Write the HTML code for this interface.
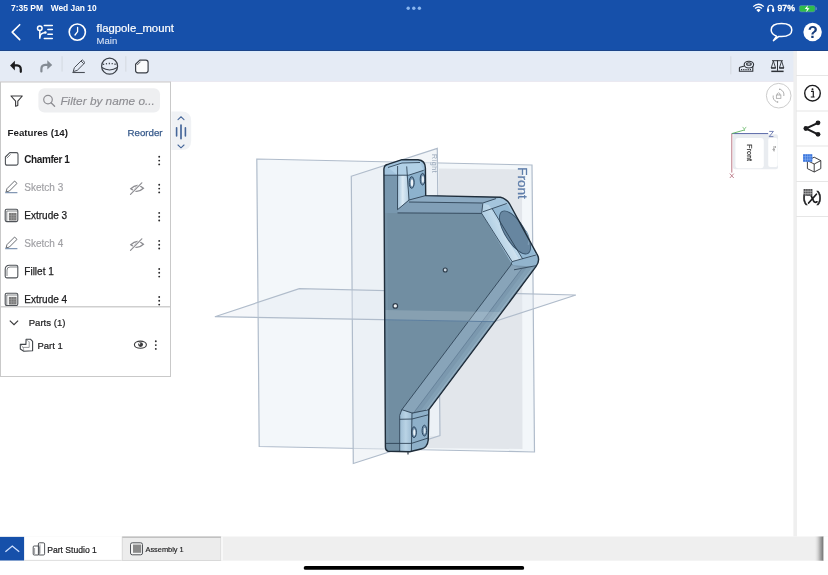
<!DOCTYPE html>
<html><head><meta charset="utf-8">
<style>
html,body{margin:0;padding:0;width:828px;height:575px;overflow:hidden;background:#fff}
svg{display:block;font-family:"Liberation Sans",sans-serif;will-change:transform}
</style></head><body>
<svg width="828" height="575" viewBox="0 0 828 575">
<!-- ===== VIEWPORT ===== -->
<defs>
  <clipPath id="silclip"><path d="M385.4,447 L383.9,169 Q384.2,164.6 388.5,164.2 L402.1,159.6 L418,159.8 Q425.3,160.5 425.4,168 L425.7,195.6 L500.5,197.2 Q506.2,198.6 509.4,203.5 L536.5,253.3 Q541,260 535.9,266.7 L428.9,409.7 L428.2,440.2 Q427.5,447.5 421,449 L409.7,451.8 L388,451.2 Q385.4,450.6 385.4,447 Z"/></clipPath>
  <linearGradient id="hl1" x1="0" y1="0" x2="1" y2="0">
    <stop offset="0" stop-color="#a2c2da"/><stop offset="0.45" stop-color="#dcebf5"/><stop offset="1" stop-color="#b0cde2"/>
  </linearGradient>
  <linearGradient id="hl2" x1="0" y1="0" x2="1" y2="-0.6">
    <stop offset="0" stop-color="#b4d1e5"/><stop offset="0.5" stop-color="#e4f0f8"/><stop offset="1" stop-color="#bcd7ea"/>
  </linearGradient>
  <linearGradient id="hl3" x1="0" y1="0" x2="1" y2="0">
    <stop offset="0" stop-color="#9dbcd3"/><stop offset="0.5" stop-color="#b9d3e5"/><stop offset="1" stop-color="#9cbbd2"/>
  </linearGradient>
</defs>
<g id="viewport">
  <polygon points="256.8,159 532,165 534.5,452 259.2,446.5" fill="#f3f7fa" stroke="#b0bccb" stroke-width="1.2"/>
  <polygon points="439,168.6 522,169.4 522.5,449 420,448 420,436 439,436" fill="#e2e6eb"/>
  <polygon points="351.3,176.2 437.3,148.4 440,435.6 353.3,463.5" fill="#e6ebf1" fill-opacity="0.5" stroke="#b0bccb" stroke-width="1.2"/>
  <polygon points="214.9,316.7 299.3,288.7 575.9,295 494,321.7" fill="#e3e9f0" fill-opacity="0.35" stroke="#b0bccb" stroke-width="1.2"/>
  <text x="0" y="0" font-size="13.5" fill="#5f7eaa" stroke="#5f7eaa" stroke-width="0.3" transform="translate(518,167.3) rotate(90)">Front</text>
  <text x="0" y="0" font-size="7" fill="#9aa8ba" transform="translate(432.4,154) rotate(90)" letter-spacing="0.6">Right</text>
</g>
<g id="part" stroke-linejoin="round">
  <path d="M385.4,447 L383.9,169 Q384.2,164.6 388.5,164.2 L402.1,159.6 L418,159.8 Q425.3,160.5 425.4,168 L425.7,195.6 L500.5,197.2 Q506.2,198.6 509.4,203.5 L536.5,253.3 Q541,260 535.9,266.7 L428.9,409.7 L428.2,440.2 Q427.5,447.5 421,449 L409.7,451.8 L388,451.2 Q385.4,450.6 385.4,447 Z" fill="#718ea2"/>
  <!-- left edge subtle strip -->
  <path d="M384.2,176 L387.4,176 L388.8,443.5 L385.4,443.5 Z" fill="#7894a9" fill-opacity="0.6"/>
  <path d="M384,175.2 L397.6,175.2 L397.5,212.9 L384.1,212.9 Z" fill="#7897ae"/>
  <!-- tab top surface -->
  <path d="M383.9,175.2 L383.9,169 Q384.2,164.6 388.5,164.2 L402.1,159.6 L418,159.8 Q425.3,160.5 425.4,168 L423.7,170.3 L408.7,175.2 Z" fill="#a2c3dc"/>
  <path d="M388,167.5 L402,163 L420,162.5 L423.7,170.3 L408.7,175.2 L397.6,175.2 Z" fill="#b1d0e6"/>
  <!-- tab right face -->
  <path d="M406.7,175.5 L423.7,170.3 L425.4,168 L425.7,195.6 L409,200 Z" fill="#8db2cd"/>
  <!-- fillet highlight strip top tab -->
  <path d="M397.6,175.2 L406.7,175.2 L409,200 L397.5,209.7 Z" fill="url(#hl1)"/>
  <!-- step face -->
  <path d="M397.5,209.7 L409,200 L425.7,195.6 L500.5,197.2 L482.8,203.5 L481.7,213.4 L397.5,212.9 Z" fill="#819fb7"/>
  <path d="M409,200 L425.7,195.6 L500.5,197.2 L496,198.8 L482.8,203 L409,202 Z" fill="#8dabc3"/>
  <!-- head ring -->
  <path d="M482.8,203 L500.5,197.2 Q506.2,198.6 509.4,203.5 L536.5,253.3 Q541,260 535.9,266.7 L512,264 L481.7,213.4 Z" fill="#a4c5dd"/>
  <!-- head face -->
  <path d="M491,208.6 L507.5,204.5 L535,254 L520.5,259.5 Z" fill="#93b8d3"/>
  <!-- highlight strip -->
  <path d="M481.7,213.4 L482.8,203.5 L488.5,205 L519.8,260.2 L512.1,261.6 Z" fill="url(#hl2)"/>
  <path d="M488.5,205 L492.2,208.7 L522.6,258.9 L519.8,260.2 Z" fill="#bcd7ea"/>
  <!-- head bottom -->
  <path d="M512.1,261.6 L522.6,258.9 L537.9,254.7 Q541,260 535.9,266.7 L514,269.8 Z" fill="#92b4cd"/>
  <!-- hole -->
  <ellipse cx="515" cy="232.4" rx="9.8" ry="24.6" transform="rotate(-32 515 232.4)" fill="#6786a0" stroke="#38536b" stroke-width="0.9"/>
  <path d="M527.5,246 Q529.8,240 526,232" fill="none" stroke="#7d9cb4" stroke-width="1.6" transform="rotate(-4 515 232.4)"/>
  <!-- arm surface -->
  <path d="M510.9,265.1 L535.9,266.7 L428.9,409.7 L412,413 L401.8,409.7 Z" fill="#7b98ae"/>
  <path d="M510.9,265.1 L522,268.4 L414,412.4 L401.8,409.7 Z" fill="#88a4b9"/>
  <path d="M527,267.5 L535.9,266.7 L428.9,409.7 L420,411.5 Z" fill="#82a0b5"/>
  <!-- bottom tab -->
  <path d="M399.7,415.4 L401.8,409.7 L412,413 L411.4,451.5 L399.7,451.3 Z" fill="url(#hl3)"/>
  <path d="M411.4,414.2 L428.9,409.7 L428.2,440.2 Q427.5,447.5 421,449 L411.4,451.5 Z" fill="#8eb0c9"/>
  <ellipse cx="414" cy="432.2" rx="2.4" ry="5.4" fill="#6f8ea8" stroke="#2c4660" stroke-width="1"/>
  <ellipse cx="414.3" cy="432.5" rx="1.1" ry="3.3" fill="#e9f2f8"/>
  <ellipse cx="424.4" cy="430.6" rx="2.3" ry="5.4" fill="#7593ac" stroke="#2c4660" stroke-width="1"/>
  <ellipse cx="424.7" cy="430.8" rx="1" ry="3.1" fill="#d5e5f0"/>
  <!-- top tab holes -->
  <ellipse cx="411.7" cy="182.5" rx="2.5" ry="5.8" fill="#6f8ea8" stroke="#2c4660" stroke-width="1"/>
  <ellipse cx="412" cy="182.8" rx="1.2" ry="3.6" fill="#eef5fa"/>
  <ellipse cx="422.6" cy="179.2" rx="2.4" ry="5.8" fill="#7593ac" stroke="#2c4660" stroke-width="1"/>
  <ellipse cx="422.9" cy="179.4" rx="1.1" ry="3.4" fill="#e2edf5"/>
  <!-- small dots on face -->
  <circle cx="395.3" cy="305.9" r="2.3" fill="#eef1f3" stroke="#2e3d4c" stroke-width="1.2"/>
  <circle cx="445.2" cy="270" r="2" fill="#c9d5de" stroke="#2e3d4c" stroke-width="1.1"/>
  <!-- edges -->
  <g fill="none" stroke="#2b3f52" stroke-width="0.85">
    <path d="M383.9,175.2 L408.7,175.2 L423.7,170.3"/>
    <path d="M388,167.5 L402,163 L420,162.5"/>
    <path d="M397.6,166 L397.5,209.7 L409,200 L425.7,195.6"/>
    <path d="M406.7,166.4 L409,200"/>
    <path d="M397.5,212.9 L481.7,213.4"/>
    <path d="M409,202 L482.8,203 L496,198.6"/>
    <path d="M482.8,203.5 L481.7,213.4 L512.1,261.6 L535.9,255"/>
    <path d="M482.8,211.8 L506.8,203.5"/>
    <path d="M492.2,208.7 L522.6,258.9"/>
    <path d="M510.9,265.1 L401.8,409.7 L399.7,415.4 L399.7,451.3"/>
    <path d="M514,269.8 L535.9,265.7"/>
    <path d="M401.8,409.7 L412,413 L428.9,409.7"/>
    <path d="M412,413 L411.4,451.5"/>
    <path d="M399.7,419.3 L412,419 L428.2,414.8"/>
    <path d="M385.4,443.4 L411.4,443.4 L428.2,438"/>
    <path d="M512.1,261.6 L510.9,265.1"/>
    <path d="M522,268.4 L414,412.4" stroke-width="0.6" stroke="#56718a"/>
    <path d="M532.2,268.2 L426.2,410" stroke-width="1" stroke="#9db6c8" stroke-opacity="0.8"/>
  </g>
  <!-- top plane band over part -->
  <g clip-path="url(#silclip)">
    <polygon points="214.9,316.7 243.5,307.2 522.6,312.6 494,321.7" fill="#e3ebf2" fill-opacity="0.2"/>
    <line x1="214.9" y1="316.7" x2="494" y2="321.7" stroke="#5d7fa0" stroke-width="1"/>
  </g>
  <path d="M385.4,447 L383.9,169 Q384.2,164.6 388.5,164.2 L402.1,159.6 L418,159.8 Q425.3,160.5 425.4,168 L425.7,195.6 L500.5,197.2 Q506.2,198.6 509.4,203.5 L536.5,253.3 Q541,260 535.9,266.7 L428.9,409.7 L428.2,440.2 Q427.5,447.5 421,449 L409.7,451.8 L388,451.2 Q385.4,450.6 385.4,447 Z" fill="none" stroke="#1f2d3a" stroke-width="1.4"/>
</g>
<path d="M408,452 L408,454.5" stroke="#3a4450" stroke-width="1.3"/>
<!-- ===== HEADER ===== -->
<rect x="0" y="0" width="828" height="51" fill="#1650aa"/>
<rect x="0" y="50" width="828" height="1" fill="#1d4488"/>
<text x="11" y="11.2" font-size="8.5" font-weight="bold" fill="#fff">7:35 PM</text>
<text x="50.7" y="11.2" font-size="8.4" font-weight="bold" fill="#fff">Wed Jan 10</text>
<circle cx="408.2" cy="8.2" r="1.7" fill="#8ab6ee"/>
<circle cx="413.8" cy="8.2" r="1.7" fill="#8ab6ee"/>
<circle cx="419.4" cy="8.2" r="1.7" fill="#8ab6ee"/>
<!-- wifi -->
<g fill="#fff">
  <path d="M758.5,12.2 L756.3,9.9 Q758.5,8.1 760.7,9.9 Z"/>
  <path d="M755.5,9.1 Q758.5,6.3 761.5,9.1 L762.4,8.1 Q758.5,4.6 754.6,8.1 Z"/>
  <path d="M753.6,7.1 Q758.5,2.7 763.4,7.1 L764.2,6.2 Q758.5,1.0 752.8,6.2 Z"/>
</g>
<!-- headphones -->
<path d="M767.9,10.8 L767.9,8.8 Q767.9,5.2 770.6,5.2 Q773.3,5.2 773.3,8.8 L773.3,10.8" fill="none" stroke="#fff" stroke-width="1.1"/>
<rect x="767" y="8.6" width="2.1" height="3.4" rx="0.9" fill="#fff"/>
<rect x="772.1" y="8.6" width="2.1" height="3.4" rx="0.9" fill="#fff"/>
<text x="777.6" y="11.3" font-size="8.6" fill="#fff" stroke="#fff" stroke-width="0.45">97%</text>
<!-- battery -->
<rect x="799.3" y="5.5" width="15.8" height="6.4" rx="1.8" fill="#2fbd4a" stroke="#5e86c8" stroke-width="0.6"/>
<rect x="815.6" y="7.3" width="1.3" height="2.8" rx="0.5" fill="#5e86c8"/>
<path d="M807.8,5.2 L804.8,9 L807,9 L806.2,12.2 L809.5,8.2 L807.3,8.2 Z" fill="#fff"/>
<!-- back chevron -->
<path d="M19.7,24.7 L12.2,32.1 L19.7,39.6" fill="none" stroke="#fff" stroke-width="1.6" stroke-linecap="round" stroke-linejoin="round"/>
<!-- branch icon -->
<g fill="none" stroke="#fff" stroke-width="1.5" stroke-linecap="round">
  <circle cx="39.8" cy="28.3" r="2.3"/>
  <path d="M39.8,30.6 L39.8,38.2"/>
  <path d="M39.8,37 Q40,33.6 45.2,32.6"/>
  <path d="M44.3,25.6 L52.3,25.6"/>
  <path d="M47.9,29.4 L52.3,29.4"/>
  <path d="M47.9,34.2 L52.3,34.2"/>
  <path d="M44.3,38.6 L52.3,38.6"/>
</g>
<circle cx="45.4" cy="32.5" r="1.3" fill="#fff"/>
<!-- clock -->
<circle cx="77.3" cy="32.1" r="8.1" fill="none" stroke="#fff" stroke-width="1.6"/>
<path d="M77.6,27.4 L77.6,31.6 L75,35" fill="none" stroke="#fff" stroke-width="1.3" stroke-linecap="round" stroke-linejoin="round"/>
<text x="96.6" y="32" font-size="11.3" fill="#fff" stroke="#fff" stroke-width="0.2">flagpole_mount</text>
<text x="96.6" y="44.2" font-size="9.5" fill="#d2def2" stroke="#d2def2" stroke-width="0.15">Main</text>
<!-- speech bubble -->
<path d="M776.6,36.3 Q771.2,34.2 771.2,30.1 Q771.2,23.6 781.5,23.6 Q791.8,23.6 791.8,30.1 Q791.8,36.6 781.5,36.6 Q779.8,36.6 778.9,36.4 L773.4,40.6 Z" fill="none" stroke="#fff" stroke-width="1.5" stroke-linejoin="round"/>
<!-- help -->
<circle cx="812.6" cy="32" r="9.2" fill="#fff"/>
<text x="812.8" y="38.2" font-size="16.5" font-weight="bold" fill="#163c7c" text-anchor="middle">?</text>

<!-- ===== TOOLBAR ===== -->
<rect x="0" y="51" width="794" height="30" fill="#e5ebf5"/>
<rect x="0" y="51" width="794" height="1.4" fill="#dcebfb"/>
<rect x="0" y="81" width="794" height="1" fill="#ebe9f1"/>
<!-- undo -->
<path d="M10.1,65.6 L14.9,60.8 L14.9,70.4 Z" fill="#1c1c1e"/>
<path d="M14,65.4 L17,65.4 Q20.8,65.6 20.8,69.5 L20.8,71.8" fill="none" stroke="#1c1c1e" stroke-width="2.2" stroke-linecap="round"/>
<!-- redo -->
<path d="M52.2,64.9 L47.3,60.2 L47.3,69.6 Z" fill="#848b94"/>
<path d="M48.2,64.8 L45.2,64.8 Q41.4,65 41.4,69 L41.4,71.4" fill="none" stroke="#848b94" stroke-width="2.2" stroke-linecap="round"/>
<rect x="61.6" y="56.2" width="0.9" height="15.4" fill="#d2d7de"/>
<!-- pencil -->
<g fill="none" stroke="#4a4f57" stroke-width="1" stroke-linejoin="round">
  <path d="M73.2,71.6 L74.4,67.6 L82.2,59.8 L85,62.6 L77.2,70.4 Z"/>
  <path d="M81,61 L83.8,63.8"/>
</g>
<path d="M72.4,72.5 L84.8,72.5" stroke="#4a4f57" stroke-width="1.1"/>
<!-- sphere -->
<circle cx="109.6" cy="66.2" r="8" fill="none" stroke="#3a3f47" stroke-width="1.2"/>
<path d="M101.8,67.6 Q109.6,72.4 117.4,67.6" fill="none" stroke="#3a3f47" stroke-width="1.2"/>
<path d="M103,64.4 Q109.6,62.6 116.2,64.4" fill="none" stroke="#3a3f47" stroke-width="1.3" stroke-dasharray="1.2 1.7"/>
<rect x="125.4" y="56.2" width="0.9" height="15.4" fill="#d2d7de"/>
<!-- chamfer tool -->
<path d="M135.6,64.2 L139.8,60.1 L145.8,60.1 Q148.1,60.1 148.1,62.4 L148.1,70.6 Q148.1,72.8 145.8,72.8 L137.9,72.8 Q135.6,72.8 135.6,70.6 Z" fill="#fafbfc" stroke="#3a3f47" stroke-width="1.2" stroke-linejoin="round"/>
<path d="M137.2,65 L140.6,61.6" stroke="#3a3f47" stroke-width="0.8"/>
<!-- right toolbar -->
<rect x="730.4" y="56.3" width="0.9" height="18" fill="#d2d7de"/>
<g fill="none" stroke="#2e3238" stroke-width="1.1">
  <ellipse cx="748.9" cy="64.6" rx="4.7" ry="3.4"/>
  <ellipse cx="748.9" cy="64" rx="2.3" ry="1.3"/>
  <path d="M744.4,66 L740,67.2 Q739.4,67.4 739.4,68 L739.4,71.3 L752.8,71.3 L752.8,66"/>
</g>
<path d="M741,69.6 L751.6,69.6" stroke="#2e3238" stroke-width="1.2" stroke-dasharray="1 0.8"/>
<g fill="#2e3238">
  <rect x="771.3" y="70.6" width="12.3" height="1.5"/>
  <rect x="772" y="60.2" width="10.8" height="1"/>
  <rect x="777" y="60.2" width="1" height="10.6"/>
  <path d="M773.4,61 L771.2,68 L775.6,68 Z" fill="none" stroke="#2e3238" stroke-width="0.9"/>
  <path d="M781.6,61 L779.4,68 L783.8,68 Z" fill="none" stroke="#2e3238" stroke-width="0.9"/>
  <rect x="771" y="67.3" width="4.8" height="1.3"/>
  <rect x="779.2" y="67.3" width="4.8" height="1.3"/>
</g>

<!-- ===== RIGHT PANEL ===== -->
<rect x="794" y="51" width="34" height="485.5" fill="#fff"/>
<rect x="793.4" y="51" width="3.6" height="485.5" fill="#efefef"/>
<g fill="#e6e6e6">
<rect x="796" y="75" width="32" height="1"/>
<rect x="796" y="110.5" width="32" height="1"/>
<rect x="796" y="145.5" width="32" height="1"/>
<rect x="796" y="181" width="32" height="1"/>
<rect x="796" y="216" width="32" height="1"/>
</g>
<!-- info -->
<circle cx="812.5" cy="93.2" r="7.8" fill="none" stroke="#1c1c1e" stroke-width="1.4"/>
<circle cx="812.5" cy="89.2" r="1" fill="#1c1c1e"/>
<path d="M811,91.4 L813.3,91.4 L813.3,96.8 M810.8,97 L814.6,97" fill="none" stroke="#1c1c1e" stroke-width="1.2"/>
<!-- share -->
<g fill="#1c1c1e">
  <circle cx="805.9" cy="128.5" r="2.4"/>
  <circle cx="818" cy="122.8" r="2.4"/>
  <circle cx="818" cy="134.3" r="2.4"/>
</g>
<path d="M818,122.8 L805.9,128.5 L818,134.3" fill="none" stroke="#1c1c1e" stroke-width="2"/>
<!-- cube w grid -->
<g>
  <path d="M814.2,157.2 L820.8,160.6 L820.8,168.6 L814.2,172 L807.4,168.6 L807.4,160.6 Z" fill="#fff" stroke="#2a2a2c" stroke-width="0.9" stroke-linejoin="round"/>
  <path d="M807.4,160.6 L814.2,164 L820.8,160.6 M814.2,164 L814.2,172" fill="none" stroke="#2a2a2c" stroke-width="0.9"/>
  <rect x="803.1" y="154.2" width="9.2" height="7.6" fill="#3a74dc"/>
  <path d="M803.1,156.7 L812.3,156.7 M803.1,159.2 L812.3,159.2 M805.4,154.2 L805.4,161.8 M807.7,154.2 L807.7,161.8 M810,154.2 L810,161.8" stroke="#9cc0f5" stroke-width="0.5"/>
</g>
<!-- variables -->
<g>
  <text x="802.4" y="202.3" font-size="14.6" fill="#1c1c1e" stroke="#1c1c1e" stroke-width="0.5">(</text>
  <text x="816.8" y="202.3" font-size="14.6" fill="#1c1c1e" stroke="#1c1c1e" stroke-width="0.5">)</text>
  <path d="M807.8,195.2 Q810.2,193.6 811.6,196.6 L813.4,200.6 Q814.8,203.4 817,201.8" fill="none" stroke="#1c1c1e" stroke-width="1.7" stroke-linecap="round"/>
  <path d="M816.4,194.2 L808.6,203" fill="none" stroke="#1c1c1e" stroke-width="1.7" stroke-linecap="round"/>
  <rect x="803.6" y="189" width="8.8" height="6.8" fill="#4a4a4c"/>
  <path d="M803.6,191.3 L812.4,191.3 M803.6,193.6 L812.4,193.6 M805.8,189 L805.8,195.8 M808,189 L808,195.8 M810.2,189 L810.2,195.8" stroke="#e0e0e0" stroke-width="0.5"/>
</g>
<!-- rotate circle -->
<circle cx="778.7" cy="95.7" r="12.3" fill="#fff" fill-opacity="0.6" stroke="#c6c6c6" stroke-width="0.9"/>
<path d="M780.5,89.5 A6,6 0 0 1 783.8,96" fill="none" stroke="#9a9a9a" stroke-width="0.8"/>
<path d="M776.6,101.8 A6,6 0 0 1 773.2,95.5" fill="none" stroke="#9a9a9a" stroke-width="0.8"/>
<circle cx="779.8" cy="89.3" r="0.8" fill="#9a9a9a"/>
<circle cx="777.5" cy="102" r="0.8" fill="#9a9a9a"/>
<rect x="776.3" y="95" width="4.6" height="3.3" fill="none" stroke="#9a9a9a" stroke-width="0.7"/>
<path d="M777.3,95 L777.3,93.6 Q778.6,92 779.9,93.6 L779.9,95" fill="none" stroke="#9a9a9a" stroke-width="0.7"/>
<!-- view cube -->
<g>
  <rect x="733" y="134.2" width="45" height="35" rx="2" fill="#e3e7ec" fill-opacity="0.8"/>
  <rect x="735.4" y="138" width="28.4" height="30.2" rx="3" fill="#fff"/>
  <rect x="768.2" y="138" width="9.4" height="29" rx="2" fill="#fff"/>
  <text x="0" y="0" font-size="7.2" fill="#333" stroke="#333" stroke-width="0.2" transform="translate(747.4,144.2) rotate(90)">Front</text>
  <text x="0" y="0" font-size="3.4" fill="#555" transform="translate(772.6,146) rotate(90)">Top</text>
  <path d="M731.8,133.6 L731.8,172.6" stroke="#b46a78" stroke-width="0.9"/>
  <path d="M731.8,133.6 L768.2,133.6" stroke="#5565a5" stroke-width="1"/>
  <path d="M731.8,133.6 L744.3,130" stroke="#5fb45f" stroke-width="0.9"/>
  <path d="M742.6,126.9 L744.4,129.2 L746.2,126.9 M744.4,129.2 L744.4,131" fill="none" stroke="#5fb45f" stroke-width="0.7"/>
  <path d="M769.2,131.4 L773.4,131.4 L769.2,136.6 L773.4,136.6" fill="none" stroke="#5565a5" stroke-width="0.8"/>
  <path d="M729.8,173.6 L733.8,178 M733.8,173.6 L729.8,178" fill="none" stroke="#b46a78" stroke-width="0.8"/>
</g>

<!-- ===== LEFT PANEL ===== -->
<rect x="0.5" y="82" width="170" height="294.5" fill="#fff" stroke="#c9c9c9" stroke-width="1"/>
<!-- funnel -->
<path d="M11,96 L22.3,96 L17.8,101.2 L17.8,105.4 L15.6,106.2 L15.6,101.2 Z" fill="none" stroke="#3a3a3c" stroke-width="1.1" stroke-linejoin="round"/>
<rect x="38.4" y="88.3" width="121.6" height="24.2" rx="6" fill="#eeeff1"/>
<circle cx="48" cy="99.6" r="4.3" fill="none" stroke="#8e8e93" stroke-width="1.2"/>
<path d="M51.1,102.8 L54.6,106.3" stroke="#8e8e93" stroke-width="1.3" stroke-linecap="round"/>
<text x="60.4" y="104.8" font-size="11.8" font-style="italic" fill="#8e8e93" stroke="#8e8e93" stroke-width="0.15">Filter by name o...</text>
<text x="7.6" y="136.2" font-size="9.7" font-weight="bold" fill="#1c1c1e">Features (14)</text>
<text x="127.5" y="136.3" font-size="9.7" fill="#36598a" stroke="#36598a" stroke-width="0.25">Reorder</text>
<g font-size="10">
<text x="24.3" y="163" fill="#1c1c1e" font-weight="bold" letter-spacing="-0.42">Chamfer 1</text>
<text x="24.3" y="190.6" fill="#a0a0a4" stroke="#a0a0a4" stroke-width="0.15">Sketch 3</text>
<text x="24.3" y="218.8" fill="#1c1c1e" stroke="#1c1c1e" stroke-width="0.25">Extrude 3</text>
<text x="24.3" y="246.8" fill="#a0a0a4" stroke="#a0a0a4" stroke-width="0.15">Sketch 4</text>
<text x="24.3" y="275" fill="#1c1c1e" stroke="#1c1c1e" stroke-width="0.25">Fillet 1</text>
<text x="24.3" y="302.9" fill="#1c1c1e" stroke="#1c1c1e" stroke-width="0.25">Extrude 4</text>
<text x="28.7" y="326.3" fill="#1c1c1e" stroke="#1c1c1e" stroke-width="0.2" font-size="9.6">Parts (1)</text>
<text x="37.4" y="349" fill="#1c1c1e" stroke="#1c1c1e" stroke-width="0.2" font-size="9.5">Part 1</text>
</g>
<!-- feature icons -->
<g fill="none" stroke="#4f5358" stroke-width="1.1" stroke-linejoin="round">
  <!-- chamfer -->
  <path d="M5.4,157 L9.8,152.6 L16.4,152.6 Q18,152.6 18,154.2 L18,163.6 Q18,165.1 16.4,165.1 L7,165.1 Q5.4,165.1 5.4,163.6 Z"/>
  <path d="M6.8,158.2 L10.6,154.4" stroke-width="0.7"/>
  <!-- extrude 3 -->
  <rect x="5.2" y="209.2" width="12.6" height="12.4" rx="1.5"/>
  <path d="M6.8,221.4 L6.8,211 L17.6,211" stroke-width="0.7"/>
  <!-- fillet -->
  <path d="M5.2,269.5 Q5.2,265.2 9.5,265.2 L16.2,265.2 Q17.8,265.2 17.8,266.8 L17.8,276.3 Q17.8,277.9 16.2,277.9 L6.8,277.9 Q5.2,277.9 5.2,276.3 Z"/>
  <path d="M7,276 L7,270 Q7,267 10,267 L17.6,267" stroke-width="0.7"/>
  <!-- extrude 4 -->
  <rect x="5.2" y="293.2" width="12.6" height="12.4" rx="1.5"/>
  <path d="M6.8,305.4 L6.8,295 L17.6,295" stroke-width="0.7"/>
</g>
<rect x="8.9" y="212.9" width="7.6" height="7.6" fill="#7a7a7a"/>
<rect x="8.9" y="296.9" width="7.6" height="7.6" fill="#7a7a7a"/>
<path d="M8.9,215.4 L16.5,215.4 M8.9,217.9 L16.5,217.9 M11.4,212.9 L11.4,220.5 M13.9,212.9 L13.9,220.5 M8.9,299.4 L16.5,299.4 M8.9,301.9 L16.5,301.9 M11.4,296.9 L11.4,304.5 M13.9,296.9 L13.9,304.5" stroke="#a8a8a8" stroke-width="0.5"/>
<!-- sketch pencils -->
<g fill="none" stroke="#5a5e63" stroke-width="0.9" stroke-linejoin="round">
  <path d="M6,192 L7,188.6 L14.6,181 L17,183.4 L9.4,191 Z"/>
  <path d="M6,220 L7,216.6 L14.6,209 L17,211.4 L9.4,219 Z" transform="translate(0,28)"/>
</g>
<path d="M5.2,192.7 L17.4,192.7 M5.2,248.7 L17.4,248.7" stroke="#8398b4" stroke-width="1.2"/>
<!-- eye slash -->
<g fill="none" stroke-linecap="round">
  <path d="M130.8,188.8 Q137,182.6 143.4,188.2 Q137,194.2 130.8,188.8 Z" stroke="#8e8e93" stroke-width="1.4"/>
  <path d="M134.6,189.6 Q135.4,186 139,186.4" stroke="#8e8e93" stroke-width="0.9"/>
  <path d="M130.5,194.4 L141.8,182.8" stroke="#fff" stroke-width="2.4"/>
  <path d="M130.5,194.4 L141.8,182.8" stroke="#8e8e93" stroke-width="1.2"/>
</g>
<g fill="none" stroke-linecap="round" transform="translate(0,56)">
  <path d="M130.8,188.8 Q137,182.6 143.4,188.2 Q137,194.2 130.8,188.8 Z" stroke="#8e8e93" stroke-width="1.4"/>
  <path d="M134.6,189.6 Q135.4,186 139,186.4" stroke="#8e8e93" stroke-width="0.9"/>
  <path d="M130.5,194.4 L141.8,182.8" stroke="#fff" stroke-width="2.4"/>
  <path d="M130.5,194.4 L141.8,182.8" stroke="#8e8e93" stroke-width="1.2"/>
</g>
<!-- dots -->
<g fill="#2c2c2e">
  <circle cx="159.2" cy="156.8" r="0.95"/><circle cx="159.2" cy="160.6" r="0.95"/><circle cx="159.2" cy="164.4" r="0.95"/>
  <circle cx="159.2" cy="184.7" r="0.95"/><circle cx="159.2" cy="188.6" r="0.95"/><circle cx="159.2" cy="192.4" r="0.95"/>
  <circle cx="159.2" cy="212.9" r="0.95"/><circle cx="159.2" cy="216.7" r="0.95"/><circle cx="159.2" cy="220.5" r="0.95"/>
  <circle cx="159.2" cy="240.9" r="0.95"/><circle cx="159.2" cy="244.7" r="0.95"/><circle cx="159.2" cy="248.5" r="0.95"/>
  <circle cx="159.2" cy="269" r="0.95"/><circle cx="159.2" cy="272.8" r="0.95"/><circle cx="159.2" cy="276.6" r="0.95"/>
  <circle cx="159.2" cy="297" r="0.95"/><circle cx="159.2" cy="300.8" r="0.95"/><circle cx="159.2" cy="304.6" r="0.95"/>
  <circle cx="155.8" cy="341.2" r="0.95"/><circle cx="155.8" cy="345.1" r="0.95"/><circle cx="155.8" cy="348.9" r="0.95"/>
</g>
<rect x="1" y="306" width="169" height="1.5" fill="#cfcfcf"/>
<!-- parts chevron -->
<path d="M9.8,320.6 L14,324.6 L18.1,320.6" fill="none" stroke="#3a3a3c" stroke-width="1.2"/>
<!-- part icon -->
<path d="M20.3,344.4 L25.9,344.4 L26.1,339.2 L30.4,339.2 L32.6,341.4 L32.6,350.8 L23.8,351.2 L20.3,349 Z" fill="none" stroke="#3f4348" stroke-width="1.1" stroke-linejoin="round"/>
<path d="M22.4,347.4 L29.2,347.4 L29.2,341.6" fill="none" stroke="#6a6e73" stroke-width="0.7"/>
<path d="M20.6,344.8 L23.2,347.2 M26.2,339.6 L29,341.8 M23.8,351 L23.4,347.6" fill="none" stroke="#6a6e73" stroke-width="0.5"/>
<!-- eye -->
<ellipse cx="140.4" cy="344.7" rx="6" ry="3.6" fill="none" stroke="#3a3a3c" stroke-width="1.1"/>
<circle cx="140.6" cy="344.6" r="2.4" fill="#3a3a3c"/>
<circle cx="139.6" cy="343.7" r="0.8" fill="#fff"/>
<!-- splitter handle -->
<path d="M171.4,111.5 L181.5,111.5 Q191.2,111.5 191.2,121 L191.2,140.6 Q191.2,150.1 181.5,150.1 L171.4,150.1 Z" fill="#f0f2f5"/>
<g fill="none" stroke="#46679a" stroke-linecap="round">
  <path d="M178,119.6 L181,116.8 L184,119.6" stroke-width="1.1"/>
  <path d="M178,145 L181,147.8 L184,145" stroke-width="1.1"/>
  <path d="M176.6,127.8 L176.6,136" stroke-width="1.6"/>
  <path d="M181,125 L181,138.6" stroke-width="1.7"/>
  <path d="M185.4,127.8 L185.4,136" stroke-width="1.6"/>
</g>

<!-- ===== BOTTOM BAR ===== -->
<rect x="0" y="536.5" width="828" height="24.2" fill="#efefef"/>
<rect x="0" y="536.9" width="24.3" height="23.6" fill="#1650aa"/>
<path d="M5.4,551.8 L12.3,546 L19.2,551.8" fill="none" stroke="#cfe0ff" stroke-width="1.3"/>
<rect x="24.3" y="536.5" width="97.5" height="24" fill="#fff"/>
<rect x="24.3" y="559.9" width="97.5" height="0.8" fill="#d8d8d8"/>
<g fill="none" stroke="#3f4348" stroke-width="0.9">
  <rect x="33.2" y="546" width="5.8" height="9" rx="1"/>
  <rect x="38.4" y="542.8" width="6.2" height="12.2" rx="1.2"/>
  <path d="M34.6,554 L34.6,548 M40,553.6 L40,544.4" stroke-width="0.5"/>
</g>
<rect x="122.3" y="537" width="98.6" height="23.5" fill="#ececec" stroke="#d8d8d8" stroke-width="0.9"/>
<rect x="221.2" y="536.5" width="1.6" height="24.2" fill="#fafafa"/>
<rect x="122.3" y="536.6" width="98.6" height="1.2" fill="#b9b9b9"/>
<rect x="130.5" y="542.8" width="12" height="12" rx="1.8" fill="#f4f4f4" stroke="#3f4348" stroke-width="0.9"/>
<rect x="133" y="544.6" width="8.2" height="8.2" fill="#8a8a8a"/>
<text x="47.2" y="553" font-size="8.6" fill="#1c1c1e" stroke="#1c1c1e" stroke-width="0.2">Part Studio 1</text>
<text x="145.5" y="551.6" font-size="7.4" fill="#1c1c1e" stroke="#1c1c1e" stroke-width="0.15">Assembly 1</text>
<defs><linearGradient id="sh" x1="0" x2="1"><stop offset="0" stop-color="#efefef" stop-opacity="0"/><stop offset="0.6" stop-color="#b0b0b0"/><stop offset="1" stop-color="#6e6e6e"/></linearGradient></defs>
<rect x="814" y="536.5" width="9.6" height="24.2" fill="url(#sh)"/>
<rect x="823.6" y="536.5" width="4.4" height="24.2" fill="#fff"/>
<rect x="303.7" y="566" width="220.5" height="3.8" rx="1.9" fill="#000"/>
</svg>
</body></html>
